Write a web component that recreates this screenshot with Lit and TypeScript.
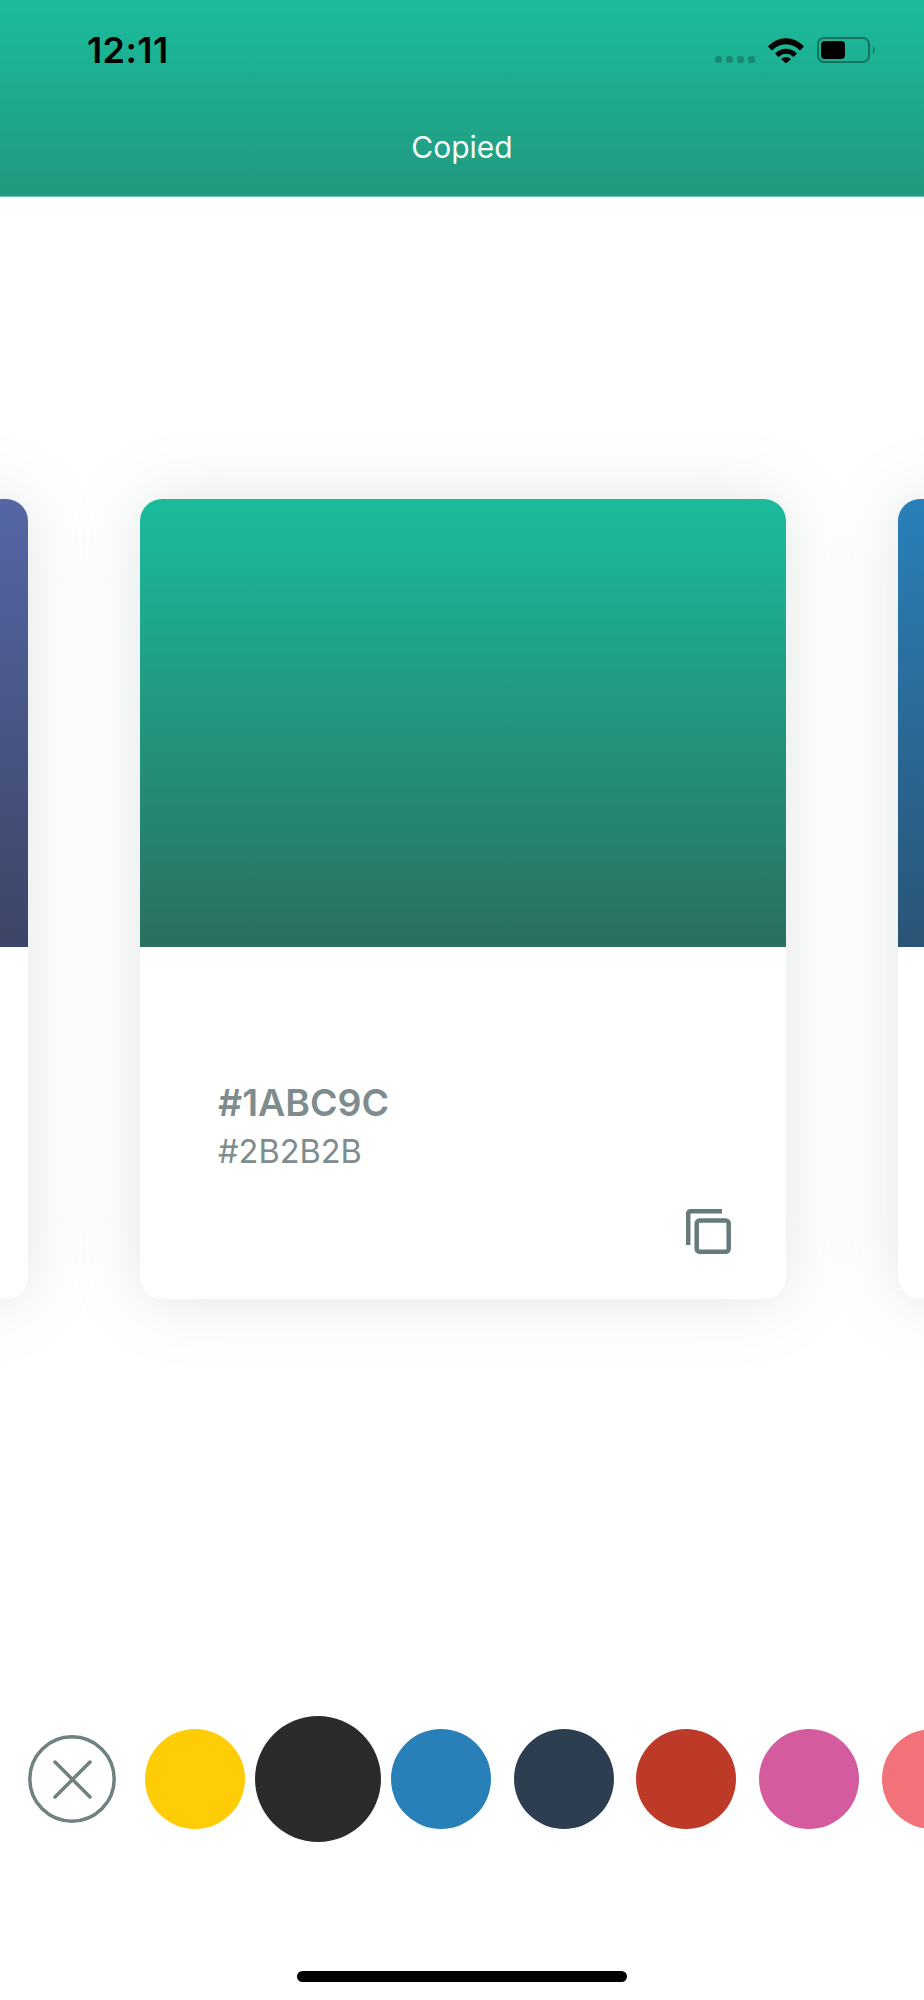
import { LitElement, css, html } from "lit";
import { customElement } from "lit/decorators.js";

const swatches = ["#FFCD05", "#2B2B2B", "#2980B9", "#2C3E50", "#BD3A29", "#D35B9E", "#F2727A"];
const SELECTED = "#2B2B2B";

@customElement("app-root")
export class AppRoot extends LitElement {
	static get styles() {
		return css`
      :host {
        display: flex;
        flex-direction: column;
        width: 924px;
        height: 2000px;
        overflow: hidden;
        background: #fff;
        font-family: Inter, "Liberation Sans", sans-serif;
      }
      .header {
        height: 196px;
        border-bottom: 1px solid #6cc4b2;
        background: linear-gradient(#1abc9c, #22997f);
        display: flex;
        flex-direction: column;
      }
      .status {
        display: flex;
        align-items: flex-start;
        padding: 37px 48px 0 87px;
        height: 26px;
      }
      .time {
        font-size: 36px;
        line-height: 26px;
        font-weight: 600;
        color: #000;
        letter-spacing: 0.4px;
      }
      .dots {
        display: flex;
        gap: 4px;
        margin: 19px 13px 0 auto;
      }
      .dots span {
        width: 7px;
        height: 7px;
        border-radius: 3px;
        background: #178a72;
      }
      .battery {
        margin-left: 13px;
      }
      .title {
        margin-top: 66px;
        text-align: center;
        font-size: 30px;
        line-height: 36px;
        color: #f4fbf9;
      }
      .carousel {
        display: flex;
        justify-content: center;
        gap: 112px;
        padding: 302px 0 417px 2px;
        overflow: hidden;
      }
      .card {
        flex: none;
        width: 646px;
        height: 800px;
        border-radius: 22px;
        background: #fff;
        box-shadow: 0 0 70px rgba(95, 120, 120, 0.19);
        display: flex;
        flex-direction: column;
        overflow: hidden;
      }
      .fill {
        height: 448px;
        flex: none;
      }
      .fill.left {
        background: linear-gradient(#5566a6, #3c4565);
      }
      .fill.mid {
        background: linear-gradient(#1abc9c, #2a6f60);
      }
      .fill.right {
        background: linear-gradient(#2980b9, #2b5475);
      }
      .body {
        flex: 1;
        display: flex;
        flex-direction: column;
        padding: 134px 55px 45px 78px;
        color: #7f8c8d;
      }
      .hex {
        font-size: 37.5px;
        line-height: 44px;
        font-weight: 600;
      }
      .sub {
        margin-top: 9px;
        font-size: 32.5px;
        line-height: 36px;
      }
      .copy {
        margin-top: auto;
        align-self: flex-end;
        display: block;
      }
      .palette {
        display: flex;
        align-items: center;
        height: 126px;
        padding-left: 28px;
        gap: 22.7px;
        flex: none;
      }
      .close {
        flex: none;
        margin-right: 6.8px;
        display: block;
      }
      .dot {
        flex: none;
        width: 100px;
        height: 100px;
        border-radius: 50%;
      }
      .dot.on {
        width: 126px;
        height: 126px;
        margin: 0 -13px;
      }
      .home {
        align-self: center;
        width: 330px;
        height: 11px;
        margin-top: 129px;
        border-radius: 6px;
        background: #000;
      }
    `;
	}

	render() {
		return html`
      <div class="header">
        <div class="status">
          <span class="time">12:11</span>
          <div class="dots"><span></span><span></span><span></span><span></span></div>
          <svg width="36" height="26" viewBox="0 0 36 26">
            <path d="M0 9.5C10-1.5 26-1.5 36 9.5L32 13.5C24 5 12 5 4 13.5Z" />
            <path d="M7 16.5C13 10 23 10 29 16.5L25.5 20C21 15.5 15 15.5 10.5 20Z" />
            <path d="M13 22C16 19.5 20 19.5 23 22L18 26.500Z" />
          </svg>
          <svg class="battery" width="59" height="26" viewBox="0 0 59 26">
            <rect x="1" y="1" width="51" height="24" rx="6" fill="none" stroke="#14725f" stroke-width="2" />
            <rect x="4" y="4" width="24" height="18" rx="4" />
            <path d="M56 8.500C58 10 58 16 56 17.500Z" fill="#14725f" />
          </svg>
        </div>
        <div class="title">Copied</div>
      </div>
      <div class="carousel">
        <div class="card" style="margin-left:-618px"><div class="fill left"></div></div>
        <div class="card">
          <div class="fill mid"></div>
          <div class="body">
            <div class="hex">#1ABC9C</div>
            <div class="sub">#2B2B2B</div>
            <svg class="copy" width="45" height="45" viewBox="0 0 45 45" fill="none" stroke="#667a7a" stroke-width="4.500">
              <path d="M2.200 36V5Q2.200 2.200 5 2.200H36" />
              <rect x="10.700" y="11.500" width="32" height="31.300" rx="3" />
            </svg>
          </div>
        </div>
        <div class="card" style="margin-right:-618px"><div class="fill right"></div></div>
      </div>
      <div class="palette">
        <svg class="close" width="88" height="88" viewBox="0 0 88 88" fill="none" stroke="#6f8180">
          <circle cx="44" cy="44" r="42.2" stroke-width="3.500" />
          <path d="M27 27L62 62M62 27L27 62" stroke-width="3.500" stroke-linecap="round" />
        </svg>
        ${swatches.map(
			(c) => html`<div class="dot ${c === SELECTED ? "on" : ""}" style="background:${c}"></div>`
		)}
      </div>
      <div class="home"></div>
    `;
	}
}
